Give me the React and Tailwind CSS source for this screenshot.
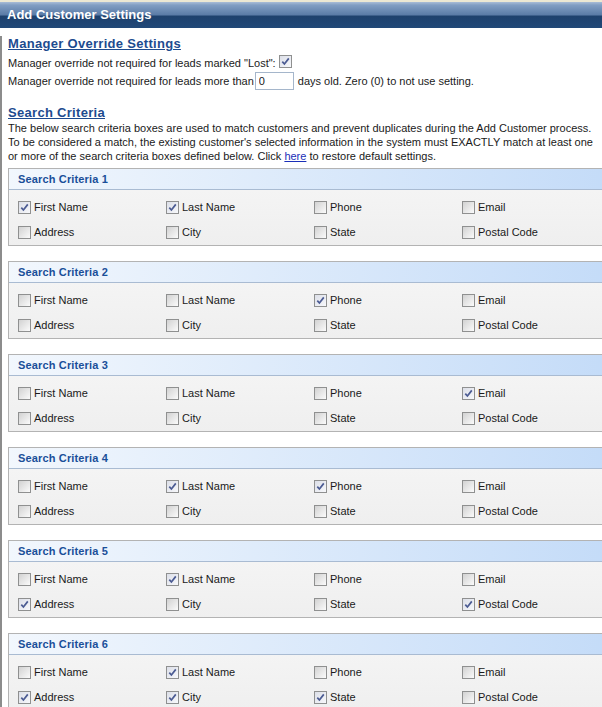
const criteria = [
  ['First Name', 'Last Name'],
  ['Phone'],
  ['Email'],
  ['Last Name', 'Phone'],
  ['Last Name', 'Address', 'Postal Code'],
  ['Last Name', 'Address', 'City', 'State'],
];

const fields = ['First Name', 'Last Name', 'Phone', 'Email', 'Address', 'City', 'State', 'Postal Code'];

const Box = ({ checked }) => (
  <span
    className={
      'inline-flex items-center justify-center w-[13px] h-[13px] shrink-0 border border-[#8f9090] ' +
      (checked
        ? 'bg-linear-to-br from-[#dcdfe8] to-[#f7f8fb]'
        : 'bg-linear-to-br from-[#d2d2d2] to-[#fbfbfb]')
    }
  >
    {checked && (
      <svg viewBox="0 0 11 11" className="w-[11px] h-[11px]">
        <path d="M2.3 5.6 L4.4 8 L8.8 2.4" stroke="#4b5b93" strokeWidth="1.7" fill="none" />
      </svg>
    )}
  </span>
);

const Panel = ({ index, checked }) => (
  <div className="border border-[#b3b3b3] mb-[15px] mr-[-20px]">
    <div className="h-[21px] border-b border-[#a9bbd2] bg-[linear-gradient(to_right,#f2f7fd,#c3dbf8)] flex items-center pl-[9px] font-bold text-[11px] tracking-[0.15px] text-[#1a4f99]">
      Search Criteria {index}
    </div>
    <div className="h-[55px] bg-[linear-gradient(to_bottom,#f4f4f4,#efefef)] pt-[5px] pl-[9px] grid grid-cols-[148px_148px_148px_148px]">
      {fields.map((f) => (
        <div key={f} className="h-[25px] flex items-center gap-[3px]">
          <Box checked={checked.includes(f)} />
          <span>{f}</span>
        </div>
      ))}
    </div>
  </div>
);

export default function App() {
  return (
    <div className="w-[602px] h-[707px] overflow-hidden bg-white font-['Liberation_Sans',Arial,sans-serif] text-[11px] text-[#1a1a1a]">
      <div className="h-[2px] bg-[#ece8d3]" />
      <div className="h-[26px] flex items-center pl-[7px] text-white font-bold text-[13px] bg-[linear-gradient(to_bottom,#a9bdd7_0%,#819ec3_12%,#5a7ba6_50%,#1e416d_54%,#214878_100%)]">
        Add Customer Settings
      </div>
      <div className="h-[679px] border-l-2 border-[#8c8c8c] pl-[6px]">
        <h2 className="mt-[8px] text-[13px] leading-[16px] font-bold tracking-[0.3px] text-[#1d4b8f] underline">
          Manager Override Settings
        </h2>
        <div className="mt-[2px] h-[18px] flex items-center">
          <span>Manager override not required for leads marked "Lost":</span>
          <span className="ml-[3px]">
            <Box checked />
          </span>
        </div>
        <div className="h-[18px] flex items-center">
          <span>Manager override not required for leads more than</span>
          <input
            defaultValue="0"
            className="ml-[1px] w-[39px] h-[18px] border border-[#a5b6cb] px-[3px] text-[11px] outline-none"
          />
          <span className="ml-[4px]">days old. Zero (0) to not use setting.</span>
        </div>
        <h2 className="mt-[15px] text-[13px] leading-[16px] font-bold tracking-[0.3px] text-[#1d4b8f] underline">
          Search Criteria
        </h2>
        <p className="leading-[14px] whitespace-nowrap">
          The below search criteria boxes are used to match customers and prevent duplicates during the Add Customer process.
          <br />
          To be considered a match, the existing customer's selected information in the system must EXACTLY match at least one
          <br />
          or more of the search criteria boxes defined below. Click{' '}
          <a href="#" className="text-[#1a2fb8] underline">here</a> to restore default settings.
        </p>
        <div className="mt-[5px]">
          {criteria.map((c, i) => (
            <Panel key={i} index={i + 1} checked={c} />
          ))}
        </div>
      </div>
    </div>
  );
}
